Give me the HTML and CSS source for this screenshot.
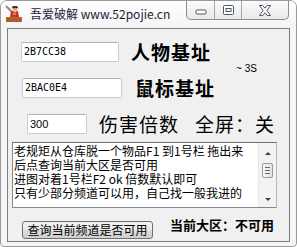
FILE: index.html
```html
<!DOCTYPE html>
<html lang="zh-CN">
<head>
    <meta charset="UTF-8">
    <meta name="viewport" content="width=device-width, initial-scale=1.0">
    <title>吾爱破解</title>
    <link rel="stylesheet" href="styles.css">
</head>
<body>

<div class="window">
    <div class="titlebar">
        <svg class="app-icon" viewBox="0 0 18 18" width="18" height="18">
            <path d="M1 1 L8 8" stroke="#8a8a8a" stroke-width="2"/>
            <rect x="1" y="12" width="16" height="5" fill="#b8692f"/>
            <path d="M2 14 H16 M2 16 H16" stroke="#8a4a1e" stroke-width="0.6"/>
            <path d="M6 6 L13 6 L14 12 L5 12 Z" fill="#c8302a"/>
            <circle cx="10" cy="5" r="2.4" fill="#e9b48c"/>
            <path d="M6.5 3.2 L13.5 3.2 L12 1 L8 1 Z" fill="#5a2a1a"/>
            <path d="M8 9 H11" stroke="#f2d0a0" stroke-width="1"/>
        </svg>
        <span class="title">吾爱破解 www.52pojie.cn</span>
        <div class="caption-buttons">
            <span class="cap cap-min">
                <svg viewBox="0 0 12 7" width="12" height="7"><rect x="1" y="1" width="10" height="4" rx="1" fill="#fff" stroke="#4d5866"/></svg>
            </span>
            <span class="cap cap-max">
                <svg viewBox="0 0 11 10" width="11" height="10"><rect x="0.5" y="0.5" width="10" height="9" rx="1" fill="#fff" stroke="#4d5866"/><rect x="3" y="3.5" width="5" height="3" fill="none" stroke="#4d5866"/></svg>
            </span>
            <span class="cap cap-close">
                <svg viewBox="0 0 12 11" width="12" height="11"><path d="M0.5 0.5 H3.8 L6 3.2 L8.2 0.5 H11.5 L7.8 5.5 L11.5 10.5 H8.2 L6 7.8 L3.8 10.5 H0.5 L4.2 5.5 Z" fill="#fff" stroke="#4d5866"/></svg>
            </span>
        </div>
    </div>

    <div class="client">
        <div class="addr-group">
            <div class="addr-rows">
                <div class="row row-player">
                    <div class="field">2B7CC38</div>
                    <span class="label bold">人物基址</span>
                </div>
                <div class="row row-mouse">
                    <div class="field">2BAC0E4</div>
                    <span class="label bold">鼠标基址</span>
                </div>
            </div>
            <span class="interval">~ 3S</span>
        </div>

        <div class="row row-damage">
            <div class="field field-small">300</div>
            <span class="label">伤害倍数</span>
            <span class="label label-screen">全屏：关</span>
        </div>

        <div class="memo">
            <div class="memo-text">
                <div class="memo-line">老规矩从仓库脱一个物品F1 到1号栏 拖出来</div>
                <div class="memo-line">后点查询当前大区是否可用</div>
                <div class="memo-line">进图对着1号栏F2 ok 倍数默认即可</div>
                <div class="memo-line">只有少部分频道可以用，自己找一般我进的</div>
            </div>
            <div class="scrollbar">
                <span class="arrow arrow-up"></span>
                <span class="thumb"><i></i><i></i><i></i></span>
                <span class="arrow arrow-down"></span>
            </div>
        </div>

        <div class="bottom-row">
            <button class="query-button">查询当前频道是否可用</button>
            <span class="status">当前大区：不可用</span>
        </div>
    </div>
</div>

</body>
</html>
```

FILE: styles.css
```css
body {
    margin: 0;
    background-color: #ffffff;
    font-family: "Noto Sans CJK SC", "Liberation Sans", sans-serif;
}
.window {
    width: 297px;
    height: 247px;
    box-sizing: border-box;
    border: 1px solid #9a9a9a;
    border-radius: 7px 7px 4px 4px;
    background-color: #f6f6f6;
    overflow: hidden;
}
.titlebar {
    height: 27px;
    display: flex;
    align-items: flex-start;
    background: linear-gradient(#ffffff, #f3f3f3);
}
.app-icon {
    margin: 4px 0 0 4px;
}
.title {
    margin: 5px 0 0 7px;
    font-size: 12px;
    line-height: 16px;
    color: #1c1c3a;
}
.caption-buttons {
    margin-left: auto;
    margin-right: 7px;
    display: flex;
    height: 18px;
    border: 1px solid #8d8d8d;
    border-top: none;
    border-radius: 0 0 5px 5px;
    background: linear-gradient(#fbfbfb, #e9e9e9);
    overflow: hidden;
}
.cap {
    display: flex;
    justify-content: center;
    align-items: center;
    height: 18px;
}
.cap-min {
    width: 27px;
    border-right: 1px solid #a8a8a8;
    align-items: flex-end;
}
.cap-min svg {
    margin-bottom: 3px;
}
.cap-max {
    width: 26px;
    border-right: 1px solid #a8a8a8;
}
.cap-close {
    width: 46px;
}
.client {
    margin: 0 6px 0 6px;
    height: 214px;
    box-sizing: border-box;
    border: 1px solid #7c7c7c;
    background-color: #f0f0f0;
    padding-top: 13px;
}
.addr-group {
    display: flex;
    align-items: center;
}
.row {
    display: flex;
    align-items: center;
    height: 20px;
}
.row-mouse {
    margin-top: 16px;
}
.row-player .field {
    margin-left: 13px;
    width: 98px;
}
.row-player .label {
    margin-left: 12px;
}
.row-mouse .field {
    margin-left: 14px;
    width: 100px;
}
.row-mouse .label {
    margin-left: 13px;
}
.field {
    box-sizing: border-box;
    height: 20px;
    background-color: #ffffff;
    border: 1px solid #c5cdd6;
    border-top-color: #abb3bd;
    border-radius: 2px;
    padding: 0 2px;
    font-family: "DejaVu Sans Mono", "Liberation Mono", monospace;
    font-size: 10px;
    line-height: 18px;
    color: #000000;
}
.field-small {
    width: 60px;
    margin-left: 19px;
    font-family: "Liberation Sans", sans-serif;
    font-size: 11px;
}
.label {
    font-size: 19px;
    line-height: 20px;
    letter-spacing: 1px;
    color: #000000;
    white-space: nowrap;
}
.label.bold {
    font-weight: 700;
}
.row-damage .label {
    margin-left: 12px;
}
.row-damage .label-screen {
    margin-left: 16px;
}
.interval {
    margin: 0 0 4px 21px;
    font-family: "Liberation Sans", sans-serif;
    font-size: 10px;
    color: #000000;
}
.row-damage {
    margin-top: 16px;
}
.memo {
    margin: 8px 0 0 4px;
    width: 265px;
    height: 66px;
    box-sizing: border-box;
    display: flex;
    background-color: #ffffff;
    border: 1px solid #828790;
    border-top-color: #6e6e6e;
    border-right-color: #b8b8b8;
}
.memo-text {
    flex: 1;
    overflow: hidden;
    padding: 1px 0 0 1px;
    font-size: 12px;
    line-height: 14px;
    color: #000000;
}
.memo-line {
    white-space: nowrap;
}
.scrollbar {
    width: 17px;
    display: flex;
    flex-direction: column;
    align-items: center;
    background-color: #f3f3f3;
    border-left: 1px solid #e6e6e6;
}
.arrow {
    height: 17px;
    width: 17px;
    display: flex;
    justify-content: center;
    align-items: center;
}
.arrow::before {
    content: "";
    border-left: 3px solid transparent;
    border-right: 3px solid transparent;
}
.arrow-up::before {
    border-bottom: 3px solid #404040;
    margin-top: 3px;
}
.arrow-down {
    margin-top: auto;
}
.arrow-down::before {
    border-top: 3px solid #404040;
    margin-top: 1px;
}
.thumb {
    margin-top: 3px;
    width: 11px;
    height: 15px;
    box-sizing: border-box;
    border: 1px solid #9a9a9a;
    border-radius: 2px;
    background: linear-gradient(90deg, #f6f6f6, #e2e2e2);
    display: flex;
    flex-direction: column;
    justify-content: center;
    align-items: center;
    gap: 2px;
}
.thumb i {
    width: 5px;
    height: 1px;
    background-color: #6a6a6a;
}
.bottom-row {
    margin-top: 10px;
    display: flex;
    align-items: center;
}
.query-button {
    margin-left: 14px;
    width: 131px;
    height: 18px;
    padding: 0;
    border: 1px solid #707070;
    border-radius: 3px;
    background: linear-gradient(#f2f2f2 0%, #ebebeb 48%, #dddddd 52%, #cfcfcf 100%);
    font-family: "Noto Sans CJK SC", sans-serif;
    font-size: 12px;
    line-height: 16px;
    color: #000000;
}
.status {
    margin: 0 0 9px 17px;
    font-size: 13px;
    font-weight: 700;
    line-height: 14px;
    color: #000000;
    white-space: nowrap;
}
```
